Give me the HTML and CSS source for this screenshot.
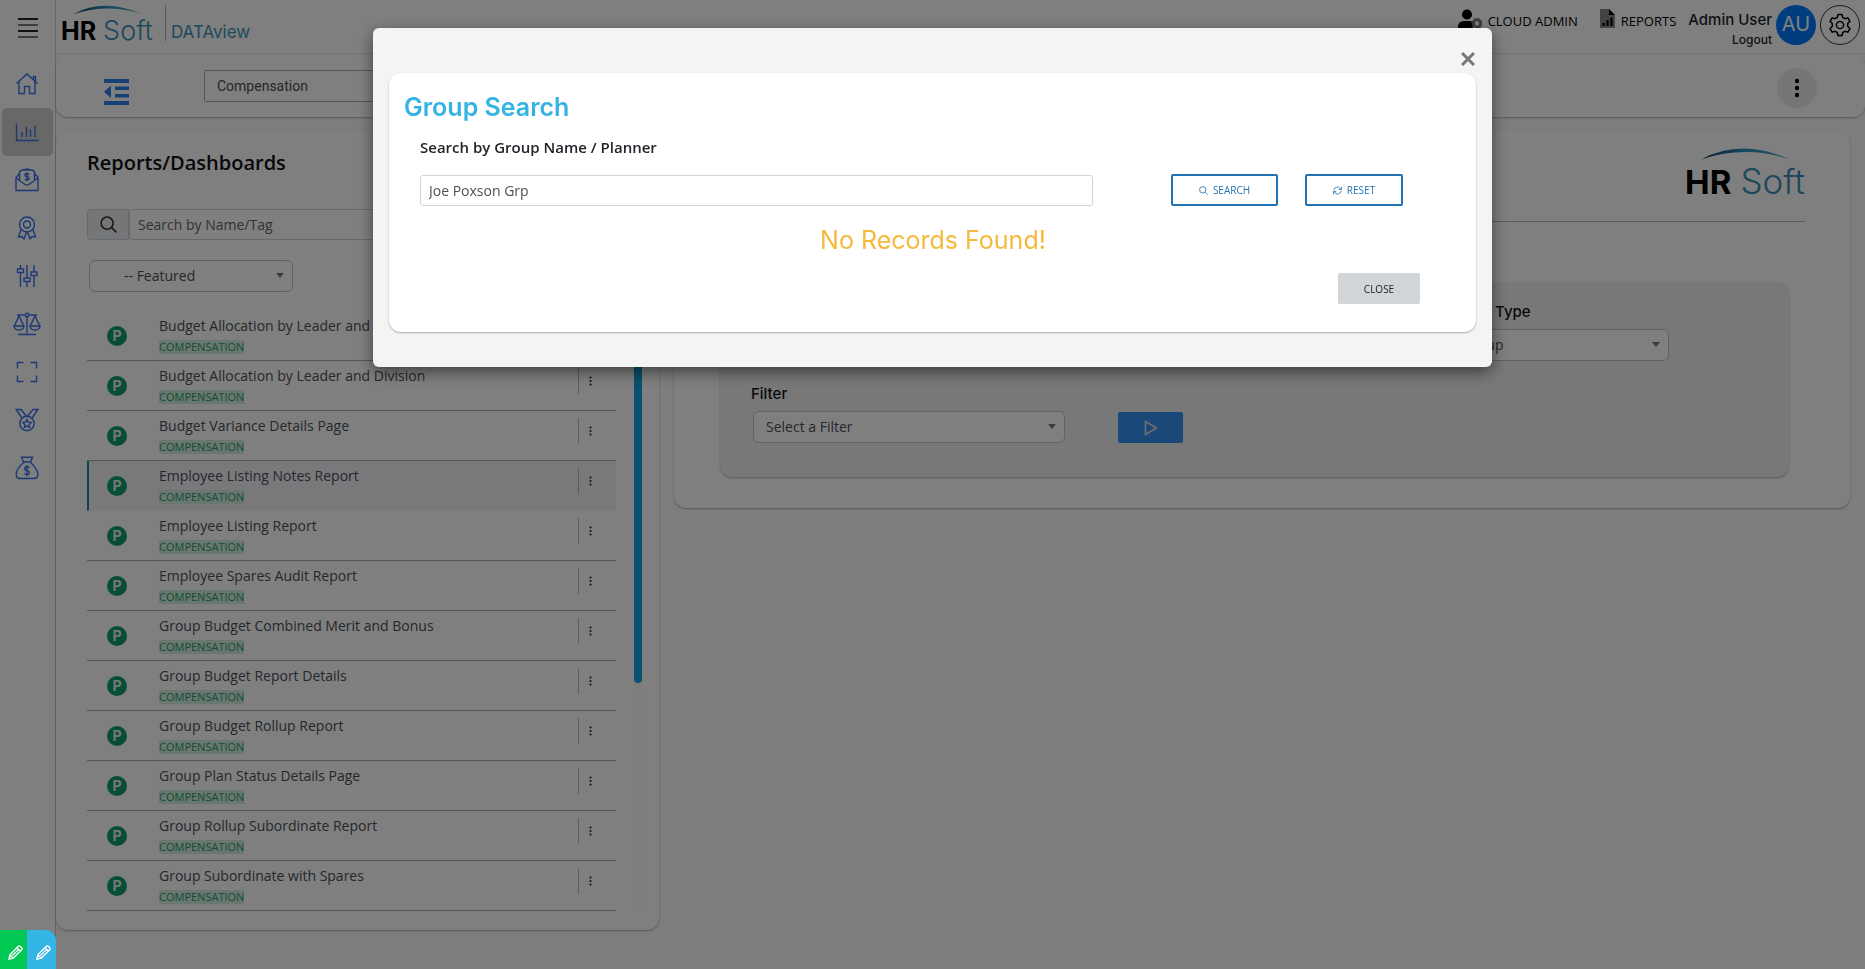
FILE: index.html
```html
<!DOCTYPE html>
<html lang="en">
<head>
<meta charset="utf-8">
<title>HRSoft DATAview</title>
<link rel="stylesheet" href="styles.css">
</head>
<body>
<svg class="defs" aria-hidden="true">
  <defs>
    <linearGradient id="arc-fill" x1="0" x2="1"><stop offset="0" stop-color="#12364e"/><stop offset=".5" stop-color="#2b8fc4"/><stop offset="1" stop-color="#49aebf"/></linearGradient>
    <symbol id="dots" viewBox="0 0 6 20"><circle cx="3" cy="3" r="2.2"/><circle cx="3" cy="10" r="2.2"/><circle cx="3" cy="17" r="2.2"/></symbol>
    <symbol id="glass" viewBox="0 0 16 16"><circle cx="6.7" cy="6.7" r="5.7"/><path d="M11 11l4.4 4.4"/></symbol>
    <symbol id="pencil" viewBox="0 0 16 16"><path d="M1 15l1-4.600L11 1.400q1-.8 2 0l1.600 1.600q.8 1 0 2L5.600 14zM9.600 3l3.400 3.400M2 10.400l3.600 3.600M4.800 11.200l6-6"/></symbol>
    <symbol id="arc" viewBox="0 0 88 12"><path d="M0 11.500Q40-10 88 11Q44-3 0 11.500z" fill="url(#arc-fill)"/></symbol>
  </defs>
</svg>
<div class="app">
  <aside class="sidebar">
    <button class="menu" aria-label="Menu"><i></i><i></i><i></i><i></i></button>
    <nav class="nav">
      <a href="#" aria-label="Home"><svg viewBox="0 0 24 24"><path d="M1.500 11.500L12 2l10.500 9.500M18.500 7.500V4.500h2v5M4 10v11.500h5.500V14.500h5v7H20V10"/></svg></a>
      <a href="#" class="active" aria-label="Reports"><svg viewBox="0 0 24 24"><path d="M1.500 3.500v17H24M7 17v-5M11.500 17V7M15.500 17V9.500M20 17V5.500"/></svg></a>
      <a href="#" aria-label="Pay letter"><svg viewBox="0 0 24 24"><path d="M4.500 5.500L1 9.500v13h22v-13l-3.500-4M1 10l9 6.500q2 1.200 4 0L23 10M4.500 12V4.500Q5 2 8 2h8q3 0 3.500 2.500V12M8 2l4-1 4 1M14 6.500q-.5-1-2-1-2 0-2 1.500t2 1.700 2 1.800-2 1.500-2-1M12 4.500v8.500"/></svg></a>
      <a href="#" aria-label="Awards"><svg viewBox="0 0 24 24"><circle cx="12" cy="8.500" r="7.500"/><circle cx="12" cy="8.500" r="3.500"/><path d="M6 13.500L3.500 21l3.500-.5 2 2.500 2.500-7M18 13.500l2.500 7.500-3.500-.5-2 2.500-2.500-7"/></svg></a>
      <a href="#" aria-label="Settings"><svg viewBox="0 0 24 24"><path d="M5.500 1v4M5.500 8.500V23M12 1v13M12 17.500V23M19 1v7M19 11.500V23"/><rect x="2.500" y="5" width="6" height="3.500"/><rect x="9" y="14" width="6" height="3.500"/><rect x="16" y="8" width="6" height="3.500"/></svg></a>
      <a href="#" aria-label="Balance"><svg class="wide" viewBox="0 0 28 24"><path d="M4 3h7.500M16.500 3H24M14 4.500V21.500M5 22.500h18M6 4L1.200 14h9.600zM22 4l-4.800 10h9.600zM1 14q.5 4 5 4t5-4zM17 14q.5 4 5 4t5-4z"/><circle cx="14" cy="3" r="1.800"/></svg></a>
      <a href="#" aria-label="Full screen"><svg viewBox="0 0 24 24"><path d="M2.500 8.500v-6h6M15.500 2.500h6v6M21.500 15.500v6h-6M8.500 21.500h-6v-6"/></svg></a>
      <a href="#" aria-label="Medals"><svg viewBox="0 0 24 24"><circle cx="12" cy="15.500" r="7.200"/><path d="M7 10L1 1.500h5l5.500 6.700M17 10l6-8.500h-5L12.500 8.200M12 11.500l1.300 2.600 2.800.4-2 2 .5 2.800-2.600-1.300-2.600 1.300.5-2.800-2-2 2.800-.4z"/></svg></a>
      <a href="#" aria-label="Budget"><svg viewBox="0 0 24 24"><path d="M8.500 6L6.500 1.200h11L15.500 6zM8.500 6.500C4.500 10 1.200 14 1.200 18.500q0 4 4 4h13.600q4 0 4-4c0-4.500-3.300-8.500-7.300-12M14.500 12q-.7-1.200-2.500-1.200-2.300 0-2.300 1.800t2.300 2 2.500 2-2.500 1.900q-2 0-2.600-1.300M12 9v11.500"/></svg></a>
    </nav>
  </aside>

  <div class="main">
    <header class="header">
      <a href="#" class="logo" aria-label="HRSoft"><svg class="arc"><use href="#arc"/></svg><span class="word"><b>HR</b><span>Soft</span></span></a>
      <span class="product">DATAview</span>
      <nav class="top-links">
        <a href="#"><svg class="user-icon" viewBox="0 0 24 24"><circle cx="9" cy="5.500" r="5"/><path d="M0 24v-6q0-6 6-6h6q2 0 3 1.500V24z"/><circle cx="19" cy="14.500" r="3.600" fill="none" stroke="#777" stroke-width="2.800"/><circle cx="19" cy="14.500" r="4.800" fill="none" stroke="#777" stroke-width="1.600" stroke-dasharray="2 1.770"/></svg>CLOUD ADMIN</a>
        <a href="#"><svg class="report-icon" viewBox="0 0 15 19"><path d="M0 0h9l6 6v13H0z" fill="#888"/><path d="M9 0l6 6H9z"/><path d="M3.500 17v-3M7.500 17v-6M11.500 17V8.500" stroke="#000" stroke-width="2.200"/></svg>REPORTS</a>
      </nav>
      <div class="who"><strong>Admin User</strong><a href="#">Logout</a></div>
      <span class="avatar">AU</span>
      <button class="gear" aria-label="Settings"><svg viewBox="0 0 24 24"><path d="M10 1.500h4l.7 3 2.200 1.200 3-.9 2 3.500-2.200 2.200v2.800l2.200 2.300-2 3.500-3-.9-2.200 1.300-.7 3h-4l-.7-3-2.200-1.300-3 .9-2-3.500 2.200-2.300v-2.800L2.100 8.300l2-3.500 3 .9L9.300 4.500z"/><circle cx="12" cy="12" r="3.600"/></svg></button>
    </header>

    <section class="toolbar card">
      <button class="collapse" aria-label="Collapse list"><svg viewBox="0 0 25 26"><path d="M0 0h25v4H0zM11 7.500h14v3.500H11zM11 15h14v3.500H11zM0 22h25v4H0zM7 6.500v12.500L0 12.800z"/></svg></button>
      <label class="module"><select aria-label="Module"><option>Compensation</option></select></label>
      <button class="more" aria-label="More"><svg><use href="#dots"/></svg></button>
    </section>

    <div class="panels">
      <section class="reports card">
        <h1>Reports/Dashboards</h1>
        <div class="find"><button aria-label="Search"><svg><use href="#glass"/></svg></button><input type="text" aria-label="Search reports" placeholder="Search by Name/Tag"></div>
        <label class="pick featured"><select aria-label="Category"><option>-- Featured</option></select></label>
        <div class="scroller">
          <ul class="list">
            <li><span class="badge">P</span><div class="name"><a href="#">Budget Allocation by Leader and Department</a><small>COMPENSATION</small></div><button aria-label="Actions"><svg><use href="#dots"/></svg></button></li>
            <li><span class="badge">P</span><div class="name"><a href="#">Budget Allocation by Leader and Division</a><small>COMPENSATION</small></div><button aria-label="Actions"><svg><use href="#dots"/></svg></button></li>
            <li><span class="badge">P</span><div class="name"><a href="#">Budget Variance Details Page</a><small>COMPENSATION</small></div><button aria-label="Actions"><svg><use href="#dots"/></svg></button></li>
            <li class="selected"><span class="badge">P</span><div class="name"><a href="#">Employee Listing Notes Report</a><small>COMPENSATION</small></div><button aria-label="Actions"><svg><use href="#dots"/></svg></button></li>
            <li><span class="badge">P</span><div class="name"><a href="#">Employee Listing Report</a><small>COMPENSATION</small></div><button aria-label="Actions"><svg><use href="#dots"/></svg></button></li>
            <li><span class="badge">P</span><div class="name"><a href="#">Employee Spares Audit Report</a><small>COMPENSATION</small></div><button aria-label="Actions"><svg><use href="#dots"/></svg></button></li>
            <li><span class="badge">P</span><div class="name"><a href="#">Group Budget Combined Merit and Bonus</a><small>COMPENSATION</small></div><button aria-label="Actions"><svg><use href="#dots"/></svg></button></li>
            <li><span class="badge">P</span><div class="name"><a href="#">Group Budget Report Details</a><small>COMPENSATION</small></div><button aria-label="Actions"><svg><use href="#dots"/></svg></button></li>
            <li><span class="badge">P</span><div class="name"><a href="#">Group Budget Rollup Report</a><small>COMPENSATION</small></div><button aria-label="Actions"><svg><use href="#dots"/></svg></button></li>
            <li><span class="badge">P</span><div class="name"><a href="#">Group Plan Status Details Page</a><small>COMPENSATION</small></div><button aria-label="Actions"><svg><use href="#dots"/></svg></button></li>
            <li><span class="badge">P</span><div class="name"><a href="#">Group Rollup Subordinate Report</a><small>COMPENSATION</small></div><button aria-label="Actions"><svg><use href="#dots"/></svg></button></li>
            <li><span class="badge">P</span><div class="name"><a href="#">Group Subordinate with Spares</a><small>COMPENSATION</small></div><button aria-label="Actions"><svg><use href="#dots"/></svg></button></li>
          </ul>
          <div class="track"><div class="thumb"></div></div>
        </div>
      </section>

      <section class="detail card">
        <div class="detail-head"><span class="logo large"><svg class="arc"><use href="#arc"/></svg><span class="word"><b>HR</b><span>Soft</span></span></span></div>
        <form class="filters">
          <div class="field type"><label for="type">Group Type</label><span class="pick"><select id="type"><option>Group</option></select></span></div>
          <div class="run-row">
            <div class="field filter"><label for="filter">Filter</label><span class="pick"><select id="filter"><option>Select a Filter</option></select></span></div>
            <button type="button" class="run" aria-label="Run"><svg viewBox="0 0 14 16"><path d="M1.500 1.500v13L12.500 8z"/></svg></button>
          </div>
        </form>
      </section>
    </div>
  </div>
</div>

<div class="overlay">
  <div class="modal" role="dialog" aria-modal="true" aria-labelledby="modal-title">
    <button class="dismiss" aria-label="Dismiss"><svg viewBox="0 0 14 14"><path d="M1 1l12 12M13 1L1 13"/></svg></button>
    <div class="modal-card card">
      <h2 id="modal-title">Group Search</h2>
      <form class="search-form">
        <label for="group">Search by Group Name / Planner</label>
        <div class="search-row">
          <input id="group" type="text" value="Joe Poxson Grp">
          <button type="button" class="outline"><svg><use href="#glass"/></svg>SEARCH</button>
          <button type="button" class="outline reset"><svg viewBox="0 0 16 16"><path d="M1.500 7.500A6.300 6.300 0 0 1 13 4.500l1.500 1.500M15 1.500V6.200h-4.700M14.500 8.500A6.300 6.300 0 0 1 3 11.500L1.500 10M1 14.500V9.800h4.700"/></svg>RESET</button>
        </div>
        <p class="empty">No Records Found!</p>
        <div class="actions"><button type="button" class="close">CLOSE</button></div>
      </form>
    </div>
  </div>
</div>
<div class="editors">
  <button aria-label="Edit page"><svg><use href="#pencil"/></svg></button>
  <button class="blue" aria-label="Edit text"><svg><use href="#pencil"/></svg></button>
</div>
</body>
</html>
```
FILE: styles.css
```css
* { box-sizing: border-box; }
body { margin: 0; background: #fafafa; color: #212529; font: 14px/20px "Open Sans", sans-serif; }
button, input, select { font: inherit; color: inherit; }
button { padding: 0; border: 0; background: none; display: flex; align-items: center; justify-content: center; }
a { color: inherit; text-decoration: none; }
svg { fill: none; stroke: currentColor; }
.defs { position: absolute; width: 0; height: 0; }
.card { background: #fff; border-radius: 12px; box-shadow: 0 1px 2px rgba(0,0,0,.3); }

.app { display: grid; grid-template-columns: 56px 1fr; min-height: 100vh; }
.sidebar { border-right: 1px solid #ccc; background: #fff; padding: 18px 2px; }
.menu { flex-direction: column; gap: 4px; margin-left: 16px; }
.menu i { width: 20px; height: 2px; background: #222; }
.menu i:nth-child(even) { background: #777; }
.nav { display: flex; flex-direction: column; margin-top: 22px; }
.nav a { height: 48px; display: flex; align-items: center; justify-content: center; color: #3672e8; border-radius: 5px; padding-right: 2px; }
.nav .active { background: #d0d0d0; }
.nav svg { width: 24px; height: 24px; stroke-width: 1.400; }
.nav .wide { width: 28px; }

.header { display: flex; height: 54px; background: #fff; border-bottom: 1px solid #e8e8e8; padding: 5px 5px 0; }
.logo { display: flex; flex-direction: column; font-family: Inter, sans-serif; }
.arc { width: 68px; height: 10px; align-self: center; stroke: none; }
.word { display: flex; align-items: baseline; gap: 7px; font-size: 27px; line-height: 32px; color: #3c8fb8; font-weight: 300; }
.word b { color: #000; font-size: 25px; font-weight: 700; }
.product { margin-left: 12px; height: 36px; border-left: 1px solid #aaa; padding: 15px 0 0 5px; font: 17px/24px Inter, sans-serif; color: #3c93b8; }
.top-links { margin-left: auto; display: flex; gap: 22px; color: #000; font-size: 13px; line-height: 33px; }
.top-links a { display: flex; gap: 6px; }
.user-icon, .report-icon { fill: #000; stroke: none; margin-top: 4px; }
.user-icon { width: 24px; height: 24px; }
.report-icon { width: 15px; height: 19px; }
.who { display: flex; flex-direction: column; align-items: flex-end; margin: 5px 4px 0 12px; font: 12px/20px Inter, sans-serif; }
.who strong { font-size: 15px; font-weight: 500; }
.who a { font-weight: 500; }
.avatar { width: 40px; height: 40px; border-radius: 50%; background: #007bff; color: #fff; font: 20px/38px Inter, sans-serif; text-align: center; }
.gear { width: 40px; height: 40px; margin-left: 4px; border: 1px solid #333; border-radius: 50%; color: #000; }
.gear svg { width: 24px; height: 24px; stroke-width: 1.500; }

.toolbar { display: flex; align-items: center; height: 63px; padding: 0 48px; }
.collapse { color: #2f80ed; margin-top: 12px; }
.collapse svg { width: 25px; height: 26px; fill: currentColor; stroke: none; }
.module { margin-left: 75px; width: 420px; }
.module select { width: 100%; height: 32px; padding: 0 12px; appearance: none; border: 1px solid #aaa; border-radius: 2px; background: #fff; font: 14px Roboto, sans-serif; color: #495057; }
.more { margin-left: auto; margin-top: 4px; width: 40px; height: 40px; border-radius: 50%; background: #ececec; color: #000; }
.more svg { width: 6px; height: 20px; fill: currentColor; stroke: none; }

.panels { display: grid; grid-template-columns: 603fr 1176fr; gap: 15px; margin: 14px 15px 0 0; align-items: start; }
.reports { padding: 17px 17px 19px 31px; }
h1 { margin: 0; font-size: 20px; line-height: 30px; font-weight: 600; color: #111; }
.find { display: flex; margin: 31px 25px 0 0; height: 31px; }
.find button { width: 42px; border: 1px solid #ced4da; border-radius: 4px 0 0 4px; background: #e9ecef; color: #333; }
.find svg { width: 17px; height: 17px; stroke-width: 1.500; }
.find input { flex: 1; border: 1px solid #ced4da; border-radius: 4px; padding: 0 8px; background: #fff; }
.find input::placeholder { color: #666; opacity: 1; }
.pick { display: block; position: relative; }
.pick select { width: 100%; height: 32px; appearance: none; border: 1px solid #c4c4c4; border-radius: 6px; background: #fff; color: #495057; padding: 0 12px; }
.pick::after { content: ""; position: absolute; right: 9px; top: 13px; border: 4px solid transparent; border-top: 5px solid #777; border-bottom: 0; }
.featured { width: 204px; margin: 20px 0 0 2px; }
.featured select { padding-left: 34px; }
.scroller { display: flex; justify-content: space-between; margin-top: 19px; }
.list { list-style: none; margin: 0; padding: 0; flex: 1; }
.list li { display: flex; height: 50px; border-bottom: 1px solid #aaa; padding-left: 20px; }
.list .selected { background: #f3f3f7; border-bottom-color: #f3f3f7; border-left: 2px solid #1a86a8; padding-left: 18px; }
.badge { width: 20px; height: 20px; margin-top: 15px; border-radius: 50%; background: #0d9f6a; color: #eee; font: 700 14px/20px Inter, sans-serif; text-align: center; }
.name { display: flex; flex-direction: column; align-items: flex-start; margin-left: 32px; flex: 1; padding-top: 5px; color: #495057; }
.name small { font-size: 11px; line-height: 14px; margin-top: 4px; background: #d4eee1; color: #1f9a6a; }
.list button { width: 38px; height: 26px; margin-top: 7px; padding-right: 15px; border-left: 1px solid #bbb; color: #222; }
.list button svg { width: 3px; height: 10px; fill: currentColor; stroke: none; }
.track { width: 8px; margin-left: 18px; background: #fafafa; border-radius: 4px; }
.thumb { height: 62%; background: #12a0dc; border-radius: 4px; }

.detail { padding: 17px 45px 31px; }
.detail-head { display: flex; justify-content: flex-end; height: 74px; border-bottom: 1px solid #b8b8b8; }
.large .arc { width: 88px; height: 12px; }
.large .word { font-size: 35px; line-height: 42px; gap: 9px; }
.large .word b { font-size: 33px; }
.filters { margin: 60px 16px 0 1px; padding: 20px 31px 34px; background: #f0f0f0; border-radius: 12px; box-shadow: 0 1px 2px rgba(0,0,0,.3); }
.field label { display: block; font: 500 15px/20px Inter, sans-serif; color: #111; }
.field .pick { margin: 7px 0 0 2px; }
.type { width: 222px; margin-left: 696px; }
.run-row { display: flex; align-items: flex-end; gap: 53px; margin-top: 23px; }
.filter { width: 314px; }
.run { width: 65px; height: 31px; border-radius: 2px; background: #3490f0; color: #ddd; }
.run svg { width: 14px; height: 16px; stroke-width: 1.700; }

.overlay { position: fixed; inset: 0; background: rgba(0,0,0,.5); display: flex; justify-content: center; align-items: flex-start; padding-top: 28px; }
.modal { width: 60%; background: #f4f4f4; border-radius: 6px; padding: 23px 16px 35px; box-shadow: 0 5px 15px rgba(0,0,0,.5); }
.dismiss { margin-left: auto; width: 16px; height: 16px; color: #777; margin-bottom: 6px; }
.dismiss svg { width: 14px; height: 14px; stroke-width: 3; }
.modal-card { padding: 17px 15px 28px; }
h2 { margin: 0; font: 600 25px/34px Inter, sans-serif; color: #35b3e2; }
.search-form { padding: 12px 0 0 16px; }
.search-form label { display: block; font-size: 15px; line-height: 22px; font-weight: 600; }
.search-row { display: flex; align-items: center; margin-top: 16px; padding-right: 58px; }
.search-row input { flex: 1; height: 31px; border: 1px solid #ced4da; border-radius: 3px; padding: 0 8px; color: #495057; }
.outline { width: 107px; height: 32px; margin-left: 78px; border: 2px solid #1f73b5; border-radius: 2px; background: #fff; color: #1f73b5; font-size: 10px; gap: 5px; }
.outline svg { width: 9px; height: 9px; stroke-width: 1.500; overflow: visible; }
.outline.reset { width: 98px; margin-left: 27px; }
.empty { margin: 18px 15px 0 0; text-align: center; font: 25px/32px Inter, sans-serif; color: #f5b93c; }
.actions { display: flex; justify-content: flex-end; margin: 17px 41px 0 0; }
.close { width: 82px; height: 31px; border-radius: 2px; background: #d1d5d8; font-size: 10px; color: #212529; }

.editors { position: fixed; left: 0; bottom: 0; display: flex; color: #fff; }
.editors button { width: 27px; height: 39px; background: #00c853; padding: 6px 0 0 3px; }
.editors .blue { width: 29px; background: #33b5e5; border-radius: 0 10px 0 0; }
.editors svg { width: 15px; height: 15px; stroke-width: 1.500; }
```
